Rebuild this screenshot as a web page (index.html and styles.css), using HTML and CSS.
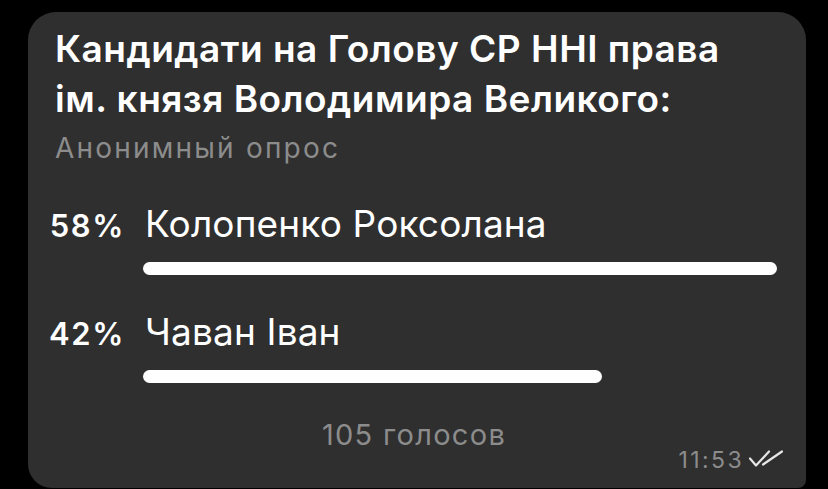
FILE: index.html
```html
<!DOCTYPE html>
<html lang="uk">
<head>
<meta charset="utf-8">
<link rel="stylesheet" href="styles.css">
</head>
<body>
<div class="bubble">
  <div class="title">Кандидати на Голову СР ННІ права ім. князя Володимира Великого:</div>
  <div class="subtitle">Анонимный опрос</div>
  <div class="options">
    <div class="option">
      <div class="pct">58%</div>
      <div class="name">Колопенко Роксолана</div>
      <div class="bar" style="width: 100%"></div>
    </div>
    <div class="option">
      <div class="pct">42%</div>
      <div class="name">Чаван Іван</div>
      <div class="bar" style="width: 72.4%"></div>
    </div>
  </div>
  <div class="votes">105 голосов</div>
  <div class="meta">
    <span class="time">11:53</span>
    <svg class="checks" width="36" height="18" viewBox="0 0 36 18">
      <path d="M3 8.5 L9 15.5 L22 1.5" fill="none" stroke="#e6e6e6" stroke-width="2.2" stroke-linecap="round" stroke-linejoin="round"/>
      <path d="M16 14.5 L35 1.5" fill="none" stroke="#e6e6e6" stroke-width="2.2" stroke-linecap="round"/>
    </svg>
  </div>
</div>
</body>
</html>
```
FILE: styles.css
```css
html, body {
  margin: 0;
  padding: 0;
  background: #000;
}
body {
  font-family: Inter, "Noto Sans", sans-serif;
  color: #fff;
}
.bubble {
  box-sizing: border-box;
  margin: 12px 0 0 28px;
  width: 778px;
  height: 476px;
  background: #2f2f2f;
  border-radius: 28px 28px 8px 24px;
  padding: 12px 29px 0 27px;
}
.title {
  font-size: 37px;
  line-height: 50px;
  font-weight: 600;
  letter-spacing: 0.5px;
}
.subtitle {
  margin-top: 7px;
  font-size: 28px;
  line-height: 34px;
  letter-spacing: 2.2px;
  color: #8c8c8c;
}
.options {
  margin-top: 37px;
  display: flex;
  flex-direction: column;
  gap: 35px;
}
.option {
  display: grid;
  grid-template-columns: 83px 1fr;
  column-gap: 17px;
  align-items: baseline;
  margin-left: -12px;
}
.pct {
  grid-column: 1;
  grid-row: 1;
  text-align: right;
  padding-right: 1px;
  font-size: 31px;
  font-weight: 600;
  letter-spacing: 1.6px;
  line-height: 44px;
}
.name {
  grid-column: 2;
  grid-row: 1;
  font-size: 37px;
  letter-spacing: 0.15px;
  line-height: 44px;
  margin-left: 2px;
}
.bar {
  grid-column: 2;
  grid-row: 2;
  height: 13px;
  margin-top: 14px;
  background: #fff;
  border-radius: 7px;
}
.votes {
  margin-top: 37px;
  text-align: center;
  font-size: 29px;
  line-height: 30px;
  letter-spacing: 1.3px;
  color: #8c8c8c;
  padding-right: 4px;
}
.meta {
  display: flex;
  justify-content: flex-end;
  align-items: center;
  margin-top: -2px;
  margin-right: -6px;
  gap: 3px;
}
.time {
  font-size: 23px;
  line-height: 24px;
  letter-spacing: 2.4px;
  color: #8c8c8c;
}
.checks {
  display: block;
  margin-top: -2px;
}
```
